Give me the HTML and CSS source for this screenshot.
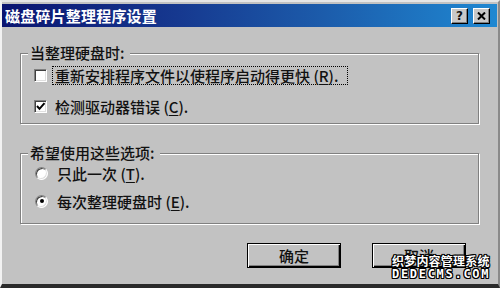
FILE: index.html
```html
<!DOCTYPE html>
<html lang="zh-CN">
<head>
<meta charset="utf-8">
<title>磁盘碎片整理程序设置</title>
<link rel="stylesheet" href="styles.css">
</head>
<body>
<div class="window">
  <div class="titlebar">
    <span class="title">磁盘碎片整理程序设置</span>
    <div class="caption-buttons">
      <span class="cap-btn help">?</span>
      <span class="cap-btn close"><svg width="9" height="8" viewBox="0 0 9 8"><path d="M1 0.5 L8 7.5 M8 0.5 L1 7.5" stroke="#000" stroke-width="2" fill="none"/></svg></span>
    </div>
  </div>
  <div class="content">
    <div class="group group-first">
      <span class="legend">当整理硬盘时:</span>
      <div class="option">
        <span class="checkbox"></span>
        <span class="label focused">重新安排程序文件以使程序启动得更快 (<u>R</u>).</span>
      </div>
      <div class="option">
        <span class="checkbox checked"><svg width="11" height="11" viewBox="0 0 11 11"><path d="M2 5 L4.5 7.8 L9.5 2.2" stroke="#000" stroke-width="2" fill="none"/></svg></span>
        <span class="label">检测驱动器错误 (<u>C</u>).</span>
      </div>
    </div>
    <div class="group group-second">
      <span class="legend">希望使用这些选项:</span>
      <div class="option radio-option">
        <span class="radio"></span>
        <span class="label">只此一次 (<u>T</u>).</span>
      </div>
      <div class="option radio-option">
        <span class="radio selected"></span>
        <span class="label">每次整理硬盘时 (<u>E</u>).</span>
      </div>
    </div>
    <div class="buttons">
      <span class="btn">确定</span>
      <span class="btn">取消</span>
    </div>
  </div>
  <div class="watermark">
    <span class="wm-cn">织梦内容管理系统</span>
    <span class="wm-en">DEDECMS.COM</span>
  </div>
</div>
</body>
</html>
```

FILE: styles.css
```css
* { box-sizing: border-box; }
html, body { margin: 0; padding: 0; }
body {
  width: 500px;
  height: 288px;
  overflow: hidden;
  background: #c0c0c0;
  font-family: "Noto Sans CJK SC", "Liberation Sans", sans-serif;
  font-size: 15px;
  font-weight: 500;
  color: #111;
}
.window {
  position: relative;
  width: 500px;
  height: 288px;
  background: #c2c2c2;
  border-style: solid;
  border-width: 2px 2px 4px 2px;
  border-color: #e6e6e6 #8a8a8a #2a2a2a #f2f2f2;
  padding: 2px 1px 0 0;
  display: flex;
  flex-direction: column;
}
.titlebar {
  height: 23px;
  flex: none;
  display: flex;
  align-items: center;
  justify-content: space-between;
  background: linear-gradient(90deg, #0a1470 0%, #16388f 35%, #1c5cab 65%, #1f88d2 100%);
}
.title {
  color: #fff;
  font-weight: bold;
  font-size: 15px;
  line-height: 17px;
  padding-left: 3px;
  letter-spacing: 0.2px;
}
.caption-buttons {
  display: flex;
  gap: 5px;
  margin-right: 7px;
}
.cap-btn {
  width: 17px;
  height: 16px;
  display: flex;
  align-items: center;
  justify-content: center;
  background: #c8c8c8;
  border: 1px solid;
  border-color: #fff #000 #000 #fff;
  box-shadow: inset -1px -1px 0 #808080;
}
.help {
  font-family: "DejaVu Sans", sans-serif;
  font-weight: bold;
  font-size: 12px;
  line-height: 12px;
}
.content {
  flex: 1;
  padding: 26px 18px 0 18px;
  display: flex;
  flex-direction: column;
}
.group {
  position: relative;
  border: 1px solid #808080;
  box-shadow: inset 1px 1px 0 #fff, 1px 1px 0 #fff;
  display: flex;
  flex-direction: column;
}
.group-first {
  padding: 11px 13px 6px;
  gap: 10px;
}
.group-second {
  margin-top: 29px;
  padding: 9px 14px 12px;
  gap: 8px;
}
.legend {
  position: absolute;
  top: -10px;
  left: 7px;
  background: #c2c2c2;
  padding: 0 6px 0 2px;
  line-height: 17px;
}
.option {
  display: flex;
  align-items: center;
  height: 21px;
}
.radio-option { height: 20px; }
.checkbox {
  width: 13px;
  height: 13px;
  flex: none;
  background: #fff;
  border: 1px solid;
  border-color: #808080 #fff #fff #808080;
  box-shadow: inset 1px 1px 0 #404040, inset -1px -1px 0 #dfdfdf;
  display: flex;
  align-items: center;
  justify-content: center;
  margin-right: 5px;
}
.radio {
  width: 13px;
  height: 13px;
  flex: none;
  border-radius: 50%;
  background: #fff;
  border: 1px solid;
  border-color: #808080 #fff #fff #808080;
  box-shadow: inset 1px 1px 0 #404040, inset -1px -1px 0 #dfdfdf;
  margin-right: 6px;
  display: flex;
  align-items: center;
  justify-content: center;
}
.radio.selected::after {
  content: "";
  width: 4px;
  height: 4px;
  border-radius: 50%;
  background: #000;
}
.label {
  border: 1px dotted transparent;
  padding: 0 2px;
  line-height: 17px;
  white-space: nowrap;
}
.label.focused { border-color: #000; padding-right: 9px; }
.label u { text-decoration-thickness: 1px; text-underline-offset: 2px; }
.buttons {
  margin-top: 19px;
  padding-right: 13px;
  display: flex;
  justify-content: flex-end;
  gap: 31px;
}
.btn {
  width: 94px;
  height: 25px;
  display: flex;
  align-items: center;
  justify-content: center;
  border: 1px solid #000;
  box-shadow: inset 1px 1px 0 #fff, inset -1px -1px 0 #000, inset -2px -2px 0 #808080;
  line-height: 17px;
}
.watermark {
  position: absolute;
  left: 390px;
  top: 251px;
  display: flex;
  flex-direction: column;
  align-items: flex-start;
  color: #fff;
  font-weight: bold;
  text-shadow: 1px 0 0 #000, -1px 0 0 #000, 0 1px 0 #000, 0 -1px 0 #000,
               1px 1px 0 #000, -1px -1px 0 #000, 1px -1px 0 #000, -1px 1px 0 #000;
}
.wm-cn {
  font-size: 12px;
  line-height: 15px;
  letter-spacing: 0.2px;
}
.wm-en {
  font-family: "DejaVu Sans Mono", monospace;
  font-size: 12px;
  line-height: 13px;
  letter-spacing: 1.7px;
}
```
